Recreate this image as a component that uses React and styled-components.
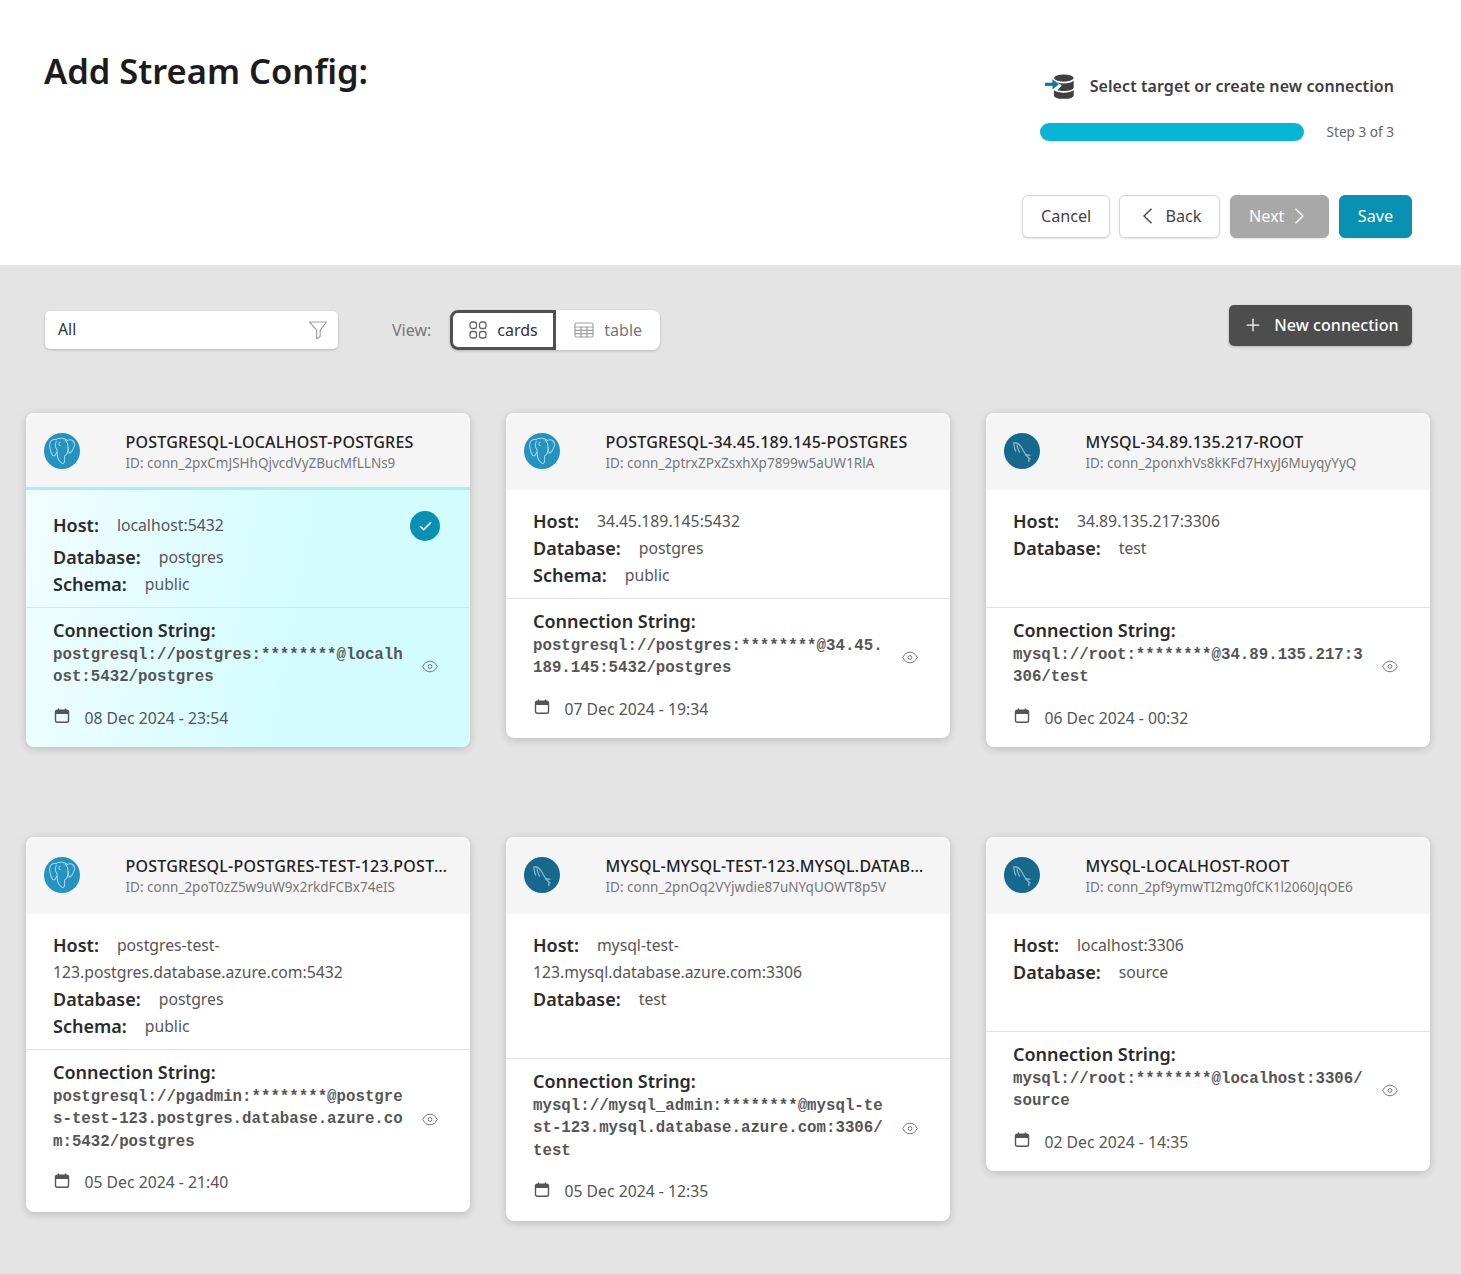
import React from "react";
import styled, { createGlobalStyle } from "styled-components";
import { Plus, Check } from "lucide-react";

const connections = [
  {
    id: "conn_2pxCmJSHhQjvcdVyZBucMfLLNs9",
    name: "POSTGRESQL-LOCALHOST-POSTGRES",
    type: "postgres",
    host: "localhost:5432",
    database: "postgres",
    schema: "public",
    uri: "postgresql://postgres:********@localhost:5432/postgres",
    date: "08 Dec 2024 - 23:54",
    selected: true,
  },
  {
    id: "conn_2ptrxZPxZsxhXp7899w5aUW1RlA",
    name: "POSTGRESQL-34.45.189.145-POSTGRES",
    type: "postgres",
    host: "34.45.189.145:5432",
    database: "postgres",
    schema: "public",
    uri: "postgresql://postgres:********@34.45.189.145:5432/postgres",
    date: "07 Dec 2024 - 19:34",
  },
  {
    id: "conn_2ponxhVs8kKFd7HxyJ6MuyqyYyQ",
    name: "MYSQL-34.89.135.217-ROOT",
    type: "mysql",
    host: "34.89.135.217:3306",
    database: "test",
    uri: "mysql://root:********@34.89.135.217:3306/test",
    date: "06 Dec 2024 - 00:32",
  },
  {
    id: "conn_2poT0zZ5w9uW9x2rkdFCBx74eIS",
    name: "POSTGRESQL-POSTGRES-TEST-123.POSTGRES.DATABASE.AZURE.COM",
    type: "postgres",
    host: "postgres-test-123.postgres.database.azure.com:5432",
    database: "postgres",
    schema: "public",
    uri: "postgresql://pgadmin:********@postgres-test-123.postgres.database.azure.com:5432/postgres",
    date: "05 Dec 2024 - 21:40",
  },
  {
    id: "conn_2pnOq2VYjwdie87uNYqUOWT8p5V",
    name: "MYSQL-MYSQL-TEST-123.MYSQL.DATABASE.AZURE.COM",
    type: "mysql",
    host: "mysql-test-123.mysql.database.azure.com:3306",
    database: "test",
    uri: "mysql://mysql_admin:********@mysql-test-123.mysql.database.azure.com:3306/test",
    date: "05 Dec 2024 - 12:35",
  },
  {
    id: "conn_2pf9ymwTI2mg0fCK1l2060JqOE6",
    name: "MYSQL-LOCALHOST-ROOT",
    type: "mysql",
    host: "localhost:3306",
    database: "source",
    uri: "mysql://root:********@localhost:3306/source",
    date: "02 Dec 2024 - 14:35",
  },
];

const StreamIcon = () => (
  <svg width="30" height="28" viewBox="0 -1 30 28">
    <ellipse cx="19" cy="5" rx="10" ry="3.600" fill="#3f3f3f" />
    <path d="M10.500 8.500c2 1.200 5 1.900 8.500 1.900 4 0 8-.9 10-2.700v6.800c0 2-4.500 3.600-10 3.600-2.500 0-4.700-.3-6.300-.8l4.300-5-6.500-3.800z" fill="#3f3f3f" />
    <path d="M9 17.200c2 1.700 6 2.500 10 2.500s8-.9 10-2.700v5.500c0 2-4.500 3.500-10 3.500S9 24.500 9 22.500z" fill="#3f3f3f" />
    <path d="M0 11.300h9" stroke="#0b7d94" strokeWidth="3.200" fill="none" />
    <path d="M7.500 6l6.500 5.300-6.500 5.300z" fill="#0b7d94" />
  </svg>
);

const FunnelIcon = () => (
  <svg width="20" height="20" viewBox="0 0 20 20" fill="none" stroke="#a3a3a3" strokeWidth="1.200" strokeLinejoin="round">
    <path d="M1.500 2h17l-6.300 8.200v6.300l-3.600 2.300v-8.600z" />
  </svg>
);

const CardsIcon = () => (
  <svg width="18" height="18" viewBox="0 0 18 18" fill="none" stroke="#666" strokeWidth="1.300">
    <rect x="1" y="1" width="6.500" height="6.500" rx="2.200" />
    <rect x="10.500" y="1" width="6.500" height="6.500" rx="2.200" />
    <rect x="1" y="10.500" width="6.500" height="6.500" rx="2.200" />
    <rect x="10.500" y="10.500" width="6.500" height="6.500" rx="2.200" />
  </svg>
);

const TableIcon = () => (
  <svg width="20" height="16" viewBox="0 0 20 16" fill="none" stroke="#a0a0a0" strokeWidth="1.200">
    <rect x="1" y="1" width="18" height="14" rx="1.500" />
    <path d="M1 5h18M1 8.300h18M1 11.700h18M7 5v10M13 5v10" />
  </svg>
);

const CalendarIcon = () => (
  <svg width="16" height="16" viewBox="0 0 16 16" fill="none" stroke="#555" strokeWidth="1.400">
    <rect x="1.500" y="2.200" width="13" height="12" rx="1.800" />
    <path d="M1.500 4.500h13" strokeWidth="3" />
    <path d="M4.500 .5v2M11.500 .5v2" />
  </svg>
);

const EyeIcon = () => (
  <svg width="16" height="13" viewBox="0 0 16 13" fill="none" stroke="#777" strokeWidth="1">
    <path d="M.7 6.500C2.500 3 5 1.200 8 1.200s5.500 1.800 7.300 5.300c-1.800 3.500-4.300 5.300-7.300 5.300S2.500 10 .7 6.500z" />
    <circle cx="8" cy="6.500" r="1.900" />
  </svg>
);

const Chevron = ({ $right }) => (
  <svg width="12" height="16" viewBox="0 0 12 16" fill="none" stroke="currentColor" strokeWidth="1.400">
    <path d={$right ? "M2.500 .8L10 8l-7.500 7.200" : "M9.500 .8L2 8l7.500 7.200"} />
  </svg>
);

const PostgresLogo = () => (
  <svg width="28" height="28" viewBox="0 0 26 27" fill="none" stroke="#a9d3e6" strokeWidth="1" strokeLinecap="round" strokeLinejoin="round">
    <path d="M7 2.500C3.500 2 1 4 1 8c0 3 1.200 7 2.800 9.500.9 1.300 2 1 2.700-.2l1.400-2.300" />
    <path d="M7 2.500c1.800-1 4-1.500 6.300-1.300 2.200.2 3.700 1 4.700 2.200" />
    <path d="M18 3.400C20 1.800 25 2.500 25 7c0 3-1.600 4.800-2.700 7-.6 1.200-1 1.400-2.800 1.300" />
    <path d="M7.500 4c-1.300 3-.7 6 .4 8 .7 1.300.3 3 .6 5.500.3 3 2 6 4 7.500 1.600 1 3 .3 3-2v-5c1-.3 2-1 2.500-2.500.8-2.500 1-5.500.7-7.500-.3-2-1.200-3.800-2.700-5" />
    <path d="M11 5c-1.300 1-1.300 3 .2 3.300M19 10c-.2 2 .2 4 1 5.300" />
  </svg>
);

const MysqlLogo = () => (
  <svg width="26" height="26" viewBox="0 0 26 26" fill="none" stroke="#8db4c7" strokeWidth="1.300" strokeLinecap="round" strokeLinejoin="round">
    <path d="M5 5c2.500-.8 4.500.2 6.500 3 2.300 3.300 3.500 6.500 5.500 9 1.300 1.600 2.700 2.800 4 4" />
    <path d="M5 5c-.3 3 .4 5 1.500 8M8 7c.3 3 1.300 5 2.500 7M17 17c1.700 0 3 .3 4 .2M19.500 21l.5 2.500" />
  </svg>
);

const App = () => (
  <>
    <GlobalStyle />
    <Header>
      <HeaderTop>
        <Title>Add Stream Config:</Title>
        <Steps>
          <StepName>
            <StreamIcon />
            <span>Select target or create new connection</span>
          </StepName>
          <StepProgress>
            <ProgressBar />
            <StepCount>Step 3 of 3</StepCount>
          </StepProgress>
        </Steps>
      </HeaderTop>
      <Actions>
        <Button $width="88px" $pl="1px">
          Cancel
        </Button>
        <Button $width="101px" $gap="11px" $pl="4px">
          <Chevron />
          Back
        </Button>
        <Button $width="99px" $gap="9px" $pr="5px" $variant="disabled">
          Next
          <Chevron $right />
        </Button>
        <Button $width="73px" $variant="primary">
          Save
        </Button>
      </Actions>
    </Header>
    <Main>
      <Toolbar>
        <FilterBox>
          <FilterText>All</FilterText>
          <FunnelIcon />
        </FilterBox>
        <ViewLabel>View:</ViewLabel>
        <ViewSwitch>
          <ViewOption $active>
            <CardsIcon />
            cards
          </ViewOption>
          <ViewOption>
            <TableIcon />
            table
          </ViewOption>
        </ViewSwitch>
        <NewButton>
          <Plus size={20} strokeWidth={1.500} />
          New connection
        </NewButton>
      </Toolbar>
      <Grid>
        {connections.map((item) => (
          <Card key={item.id} $selected={item.selected}>
            <CardHeader $selected={item.selected}>
              <Avatar $type={item.type}>
                {item.type === "postgres" ? <PostgresLogo /> : <MysqlLogo />}
              </Avatar>
              <CardTitles>
                <CardName>{item.name}</CardName>
                <CardId>ID: {item.id}</CardId>
              </CardTitles>
            </CardHeader>
            <Details>
              <Row $selected={item.selected}>
                <RowText $selected={item.selected}>
                  <Label>Host:</Label>
                  <Value>{item.host}</Value>
                </RowText>
                {item.selected && (
                  <SelectedMark>
                    <Check size={15} strokeWidth={2.500} />
                  </SelectedMark>
                )}
              </Row>
              <Row>
                <RowText>
                  <Label>Database:</Label>
                  <Value>{item.database}</Value>
                </RowText>
              </Row>
              {item.schema ? (
                <Row>
                  <RowText>
                    <Label>Schema:</Label>
                    <Value>{item.schema}</Value>
                  </RowText>
                </Row>
              ) : (
                <EmptyRow />
              )}
            </Details>
            <ConnectionPart>
              <ConnectionLabel>Connection String:</ConnectionLabel>
              <UriRow>
                <Uri>{item.uri}</Uri>
                <EyeIcon />
              </UriRow>
              <DateRow>
                <CalendarIcon />
                {item.date}
              </DateRow>
            </ConnectionPart>
          </Card>
        ))}
      </Grid>
    </Main>
  </>
);

export default App;

const GlobalStyle = createGlobalStyle`
  * {
    box-sizing: border-box;
  }

  body {
    margin: 0;
    background: #e4e4e4;
    font-family: "Noto Sans", sans-serif;
    color: #333;
  }
`;

const Header = styled.header`
  height: 265px;
  background: #fff;
  padding: 0 49px 27px 44px;
  display: flex;
  flex-direction: column;
`;

const HeaderTop = styled.div`
  display: flex;
  justify-content: space-between;
  align-items: flex-start;
  flex: 1;
`;

const Title = styled.h1`
  margin: 47px 0 0;
  font-size: 34.500px;
  line-height: 48px;
  font-weight: 600;
  color: #1c1c1c;
`;

const Steps = styled.div`
  width: 354px;
  margin: 72px 18px 0 0;
`;

const StepName = styled.div`
  display: flex;
  align-items: center;
  padding-left: 5px;
  gap: 15px;
  font-size: 16px;
  letter-spacing: 0.080px;
  font-weight: 600;
  color: #3d3d3d;
  height: 28px;
  white-space: nowrap;
`;

const StepProgress = styled.div`
  display: flex;
  align-items: center;
  justify-content: space-between;
  margin-top: 23px;
  height: 18px;
`;

const ProgressBar = styled.div`
  width: 264px;
  height: 18px;
  border-radius: 9px;
  background: #07b6d5;
`;

const StepCount = styled.span`
  font-size: 13.600px;
  line-height: 18px;
  color: #666;
`;

const Actions = styled.div`
  display: flex;
  justify-content: flex-end;
  gap: 9.800px;
`;

const Button = styled.button`
  display: flex;
  align-items: center;
  justify-content: center;
  gap: ${(p) => p.$gap || "0"};
  width: ${(p) => p.$width};
  height: 43px;
  padding: 0 ${(p) => p.$pr || "0"} 2px ${(p) => p.$pl || "0"};
  border-radius: 6px;
  font-family: inherit;
  font-size: 16.200px;
  cursor: pointer;
  border: 1px solid
    ${(p) => (p.$variant === "primary" ? "#0891b2" : p.$variant === "disabled" ? "#a8a8a8" : "#d6d6d6")};
  background: ${(p) =>
    p.$variant === "primary" ? "#0891b2" : p.$variant === "disabled" ? "#a8a8a8" : "#fff"};
  color: ${(p) => (p.$variant ? "#fff" : "#444")};
  box-shadow: 0 1px 2px rgba(0, 0, 0, 0.12);
`;

const Main = styled.main`
  padding: 40px 31px 53px 26px;
`;

const Toolbar = styled.div`
  display: flex;
  align-items: flex-start;
  padding: 0 18px 0 19px;
  height: 41px;
  margin-bottom: 67px;
`;

const FilterBox = styled.div`
  width: 293px;
  height: 38px;
  margin-top: 6px;
  display: flex;
  align-items: center;
  justify-content: space-between;
  padding: 0 10px 0 13px;
  background: #fff;
  border-radius: 5px;
  box-shadow: 0 1px 3px rgba(0, 0, 0, 0.2);
`;

const FilterText = styled.span`
  font-size: 15.750px;
  line-height: 20px;
  margin-bottom: 2px;
  color: #333;
`;

const ViewLabel = styled.span`
  margin: 5px 18px 0 54px;
  line-height: 40px;
  font-size: 16px;
  color: #777;
`;

const ViewSwitch = styled.div`
  display: flex;
  margin: 5px 0 0 1px;
  height: 40px;
  background: #fff;
  border-radius: 8px;
  box-shadow: 0 1px 3px rgba(0, 0, 0, 0.2);
`;

const ViewOption = styled.div`
  display: flex;
  align-items: center;
  gap: 10px;
  width: ${(p) => (p.$active ? "106px" : "104px")};
  padding-left: ${(p) => (p.$active ? "16px" : "18px")};
  font-size: 16px;
  color: ${(p) => (p.$active ? "#333" : "#777")};
  border: ${(p) => (p.$active ? "3px solid #505050" : "0")};
  border-radius: ${(p) => (p.$active ? "8px 0 0 8px" : "0 8px 8px 0")};
`;

const NewButton = styled.button`
  margin-left: auto;
  width: 183px;
  height: 41px;
  display: flex;
  align-items: center;
  justify-content: center;
  gap: 11px;
  padding: 0 0 2px 1px;
  border: 0;
  border-radius: 5px;
  background: #4d4d4d;
  color: #fff;
  font-family: inherit;
  font-size: 16.150px;
  font-weight: 500;
  box-shadow: 0 1px 3px rgba(0, 0, 0, 0.2);
`;

const Grid = styled.div`
  display: grid;
  grid-template-columns: repeat(3, 444px);
  column-gap: 36px;
  row-gap: 89.700px;
  align-items: start;
`;

const Card = styled.article`
  background: ${(p) => (p.$selected ? "linear-gradient(100deg, #f2feff 0%, #d3fcff 62%, #d3fcff 100%)" : "#fff")};
  border-radius: 8px;
  overflow: hidden;
  box-shadow: 0 2px 8px rgba(0, 0, 0, 0.18);
`;

const CardHeader = styled.div`
  display: flex;
  align-items: center;
  height: 77px;
  padding: 0 22px 1px 18px;
  background: #f5f5f5;
  box-shadow: ${(p) => (p.$selected ? "inset 0 -3px 0 #a4f0f8" : "none")};
`;

const Avatar = styled.div`
  flex: none;
  width: 36px;
  height: 36px;
  border-radius: 50%;
  display: flex;
  align-items: center;
  justify-content: center;
  background: ${(p) => (p.$type === "postgres" ? "#2593bf" : "#16688d")};
`;

const CardTitles = styled.div`
  min-width: 0;
  margin: 2px 0 0 45.500px;
  display: flex;
  flex-direction: column;
`;

const CardName = styled.div`
  font-size: 16px;
  letter-spacing: 0.230px;
  line-height: 22px;
  font-weight: 500;
  color: #222;
  white-space: nowrap;
  overflow: hidden;
  text-overflow: ellipsis;
`;

const CardId = styled.div`
  font-size: 13.500px;
  line-height: 20px;
  color: #777;
  white-space: nowrap;
`;

const Details = styled.div`
  padding: 18px 27px 9px;
  border-bottom: 1px solid #e2e2e2;
`;

const Row = styled.div`
  display: flex;
  align-items: center;
  justify-content: space-between;
  line-height: 27px;
  font-size: 18px;
  min-height: ${(p) => (p.$selected ? "36px" : "27px")};
`;

const RowText = styled.div`
  margin-bottom: ${(p) => (p.$selected ? "2px" : "0")};
`;

const EmptyRow = styled.div`
  height: 36px;
`;

const Label = styled.span`
  font-size: 18px;
  font-weight: 600;
  color: #2b2b2b;
`;

const ConnectionLabel = styled(Label)`
  display: block;
  line-height: 27px;
`;

const Value = styled.span`
  margin-left: 18px;
  font-size: 15.750px;
  line-height: 1;
  vertical-align: 1px;
  color: #555;
`;

const SelectedMark = styled.span`
  flex: none;
  width: 30px;
  height: 30px;
  margin-right: 3px;
  border-radius: 50%;
  background: #0891b2;
  color: #fff;
  display: flex;
  align-items: center;
  justify-content: center;
`;

const ConnectionPart = styled.div`
  padding: 9px 32px 15.500px 27px;
`;

const UriRow = styled.div`
  display: flex;
  align-items: center;
  justify-content: space-between;
`;

const Uri = styled.div`
  width: 355px;
  font-family: "Liberation Mono", monospace;
  font-size: 15.750px;
  line-height: 22.400px;
  font-weight: 700;
  color: #555;
  word-break: break-all;
`;

const DateRow = styled.div`
  display: flex;
  align-items: center;
  gap: 14.500px;
  margin-top: 16px;
  line-height: 27px;
  font-size: 15.750px;
  color: #555;

  svg {
    margin: -4px 0 0 1px;
  }
`;
